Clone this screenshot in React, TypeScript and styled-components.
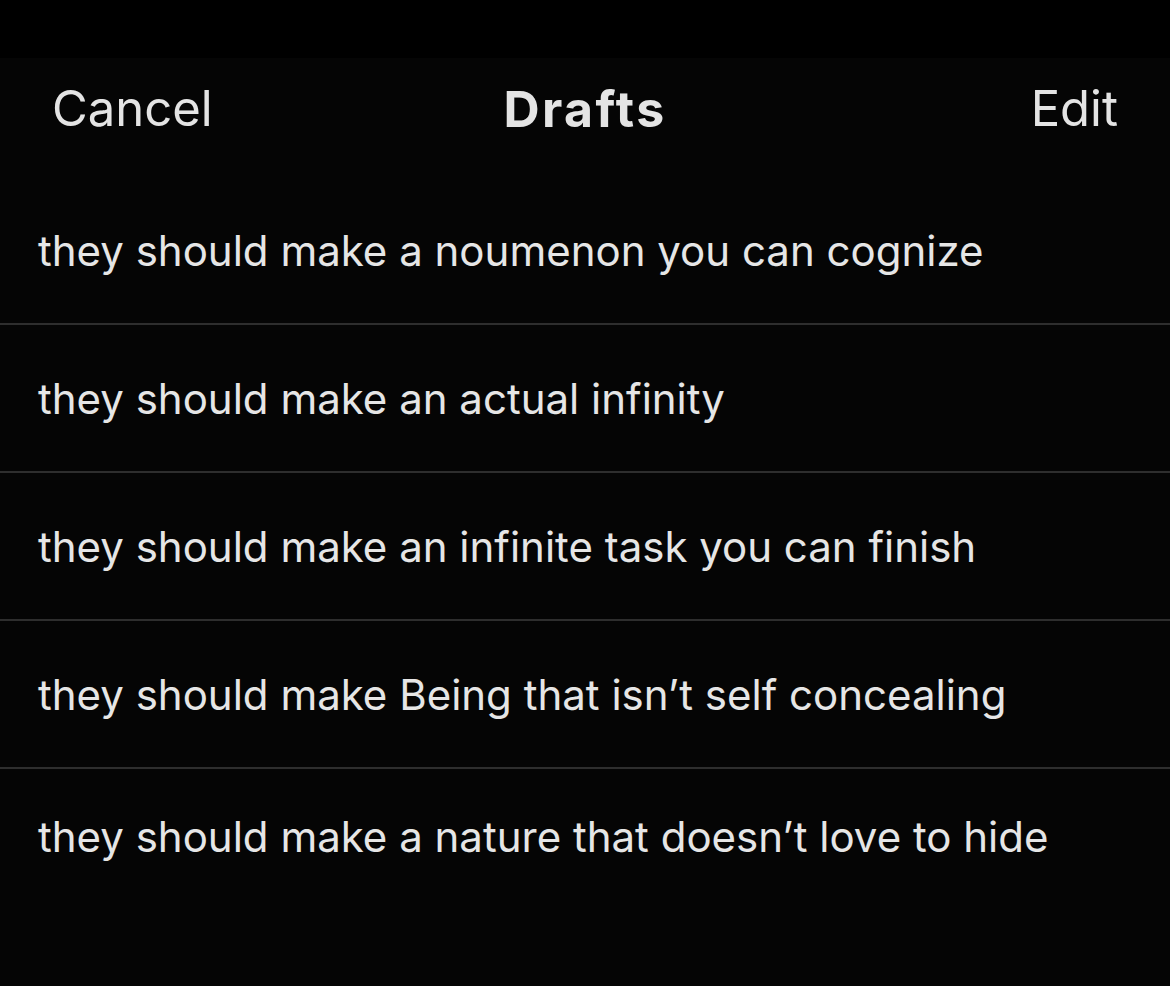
import React from "react";
import styled, { createGlobalStyle } from "styled-components";

const Global = createGlobalStyle`
  html, body { margin: 0; padding: 0; background: #000; }
  body { font-family: Inter, "Noto Sans", sans-serif; -webkit-font-smoothing: antialiased; }
`;

const Page = styled.div`
  width: 1170px;
  height: 986px;
  background: #000;
  display: flex;
  flex-direction: column;
  overflow: hidden;
`;

const TopStrip = styled.div`
  height: 58px;
  background: #000;
  flex-shrink: 0;
`;

const Sheet = styled.div`
  flex: 1;
  background: #050505;
  display: flex;
  flex-direction: column;
`;

const Header = styled.div`
  height: 119px;
  display: grid;
  grid-template-columns: 1fr auto 1fr;
  align-items: center;
  padding: 0 52px 18px 52px;
  box-sizing: border-box;
  color: #e4e4e4;
`;

const HeaderButton = styled.span<{ $align: "left" | "right" }>`
  font-size: 49px;
  font-weight: 400;
  justify-self: ${(p) => (p.$align === "left" ? "start" : "end")};
`;

const Title = styled.span`
  font-size: 50px;
  font-weight: 700;
  letter-spacing: 2.4px;
`;

const Row = styled.div<{ $last?: boolean }>`
  height: ${(p) => (p.$last ? "auto" : "146px")};
  flex: ${(p) => (p.$last ? "1" : "none")};
  display: flex;
  align-items: ${(p) => (p.$last ? "flex-start" : "center")};
  padding: ${(p) => (p.$last ? "42px 38px 0" : "0 38px")};
  border-bottom: ${(p) => (p.$last ? "none" : "2px solid #2e2e2e")};
  font-size: 42px;
  color: #e6e6e6;
`;

const drafts = [
  "they should make a noumenon you can cognize",
  "they should make an actual infinity",
  "they should make an infinite task you can finish",
  "they should make Being that isn\u2019t self concealing",
  "they should make a nature that doesn\u2019t love to hide",
];

export default function App() {
  return (
    <Page>
      <Global />
      <TopStrip />
      <Sheet>
        <Header>
          <HeaderButton $align="left">Cancel</HeaderButton>
          <Title>Drafts</Title>
          <HeaderButton $align="right">Edit</HeaderButton>
        </Header>
        {drafts.map((d, i) => (
          <Row key={i} $last={i === drafts.length - 1}>
            {d}
          </Row>
        ))}
      </Sheet>
    </Page>
  );
}
